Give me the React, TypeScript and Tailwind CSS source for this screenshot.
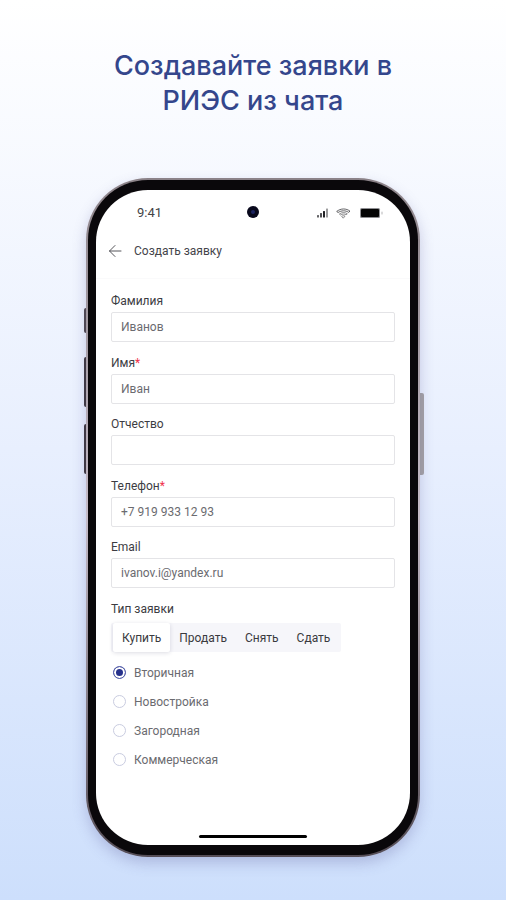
import { useState } from 'react'

type Field = {
  id: string
  label: string
  value: string
  required?: boolean
}

const FIELDS: Field[] = [
  { id: 'surname', label: 'Фамилия', value: 'Иванов' },
  { id: 'name', label: 'Имя', value: 'Иван', required: true },
  { id: 'patronymic', label: 'Отчество', value: '' },
  { id: 'phone', label: 'Телефон', value: '+7 919 933 12 93', required: true },
  { id: 'email', label: 'Email', value: 'ivanov.i@yandex.ru' },
]

const DEALS = ['Купить', 'Продать', 'Снять', 'Сдать']
const KINDS = ['Вторичная', 'Новостройка', 'Загородная', 'Коммерческая']

function StatusBar() {
  return (
    <div className="relative flex items-center justify-between pl-[41px] pr-[26px] pt-[14px] h-[32px]">
      <span className="text-[13px] leading-[18px] text-[#444446]">9:41</span>
      <div className="absolute left-1/2 top-[16px] -translate-x-1/2 w-[12px] h-[12px] rounded-full bg-[#08081c] flex items-center justify-center">
        <span className="w-[4px] h-[4px] rounded-full bg-[#1c2360]" />
      </div>
      <div className="flex items-center text-[#222226]">
        {/* signal */}
        <svg width="12" height="10" viewBox="0 0 12 10" fill="currentColor">
          <rect x="0" y="7" width="2" height="2.5" rx="0.5" opacity="0.7" />
          <rect x="3" y="5" width="2" height="4.5" rx="0.5" opacity="0.8" />
          <rect x="6" y="3" width="2" height="6.5" rx="0.5" />
          <rect x="9" y="0.5" width="2" height="9" rx="0.5" opacity="0.45" />
        </svg>
        {/* wifi */}
        <svg className="ml-[7px]" width="15" height="11" viewBox="0 0 15 11" fill="none" stroke="currentColor" strokeLinecap="round" strokeLinejoin="round">
          <path d="M1 3.2C4.8 0.2 10.2 0.2 14 3.2L12.6 4.3C9.6 2.3 5.4 2.3 2.4 4.3Z" strokeWidth="0.7" />
          <path d="M3.7 5.8C5.9 4.1 9.1 4.1 11.3 5.8L10 6.8C8.5 5.8 6.5 5.8 5 6.8Z" strokeWidth="0.5" />
          <path d="M6 8.2C6.9 7.5 8.1 7.5 9 8.2L7.5 9.9Z" strokeWidth="0.5" />
        </svg>
        {/* battery */}
        <svg className="ml-[9px]" width="24" height="10" viewBox="0 0 24 10">
          <rect x="0" y="0" width="20" height="10" rx="1.5" fill="#8e8e92" />
          <rect x="1" y="1" width="18" height="8" rx="1" fill="#050505" />
          <rect x="21.5" y="3.5" width="1" height="3" rx="0.5" fill="#b5b5b8" />
        </svg>
      </div>
    </div>
  )
}

export default function App() {
  const [values, setValues] = useState<Record<string, string>>(
    Object.fromEntries(FIELDS.map((f) => [f.id, f.value]))
  )
  const [deal, setDeal] = useState('Купить')
  const [kind, setKind] = useState('Вторичная')

  return (
    <div className="min-h-screen overflow-hidden bg-linear-to-b from-white via-[#e8effe] to-[#cddffc] px-6 pt-[48px] pb-[43px] font-['Roboto',sans-serif]">
      <h1 className="mx-auto max-w-[320px] text-center font-['Inter',sans-serif] font-medium text-[27px] leading-[35px] text-[#34468c]">
        Создавайте заявки в РИЭС из чата
      </h1>

      <div className="relative mx-auto mt-[60px] w-full max-w-[334px]">
        {/* side buttons */}
        <div className="absolute -left-[2px] top-[130px] w-[6px] h-[25px] rounded-xs bg-[#4b4347]" />
        <div className="absolute -left-[2px] top-[179px] w-[6px] h-[50px] rounded-xs bg-[#3a3337]" />
        <div className="absolute -left-[2px] top-[246px] w-[6px] h-[50px] rounded-xs bg-[#3a3337]" />
        <div className="absolute -right-[4px] top-[215px] w-[6px] h-[82px] rounded-xs bg-[#a5a2a4]" />

        <div className="relative rounded-[62px] bg-linear-to-b from-[#8b8288] via-[#c5bcc8] to-[#554d56] p-[2px] shadow-[0_6px_14px_rgba(96,96,160,0.3)]">
          <div className="rounded-[60px] bg-[#0a080b] px-[8px] py-[10px]">
            <div className="flex flex-col rounded-[52px] bg-white overflow-hidden">
              <StatusBar />

              <header className="flex items-center gap-3 border-b border-[#fafafb] px-3 mt-[16px] pb-[14px]">
                <button type="button" aria-label="Назад" className="text-[#55555a]">
                  <svg width="14" height="14" viewBox="0 0 14 14" fill="none" stroke="currentColor" strokeWidth="1">
                    <path d="M13 7H1.5M7 1.5L1.5 7L7 12.5" strokeLinecap="round" strokeLinejoin="round" />
                  </svg>
                </button>
                <h2 className="text-[12px] leading-[26px] text-[#44444a]">Создать заявку</h2>
              </header>

              <form className="px-[15px] pt-[14px]" onSubmit={(e) => e.preventDefault()}>
                <div className="grid grid-rows-5 h-[308px]">
                  {FIELDS.map((f) => (
                    <div key={f.id} className="flex flex-col gap-[3px]">
                      <label htmlFor={f.id} className="text-[12px] leading-[16px] text-[#3c3c42]">
                        {f.label}
                        {f.required && <span className="text-[#f0324b]">*</span>}
                      </label>
                      <input
                        id={f.id}
                        value={values[f.id]}
                        onChange={(e) => setValues({ ...values, [f.id]: e.target.value })}
                        className="w-full h-[30px] rounded-xs border border-[#e4e4e7] bg-white px-[9px] text-[12px] text-[#6b6b70] outline-none focus:border-[#34468c]"
                      />
                    </div>
                  ))}
                </div>

                <p className="text-[12px] leading-[16px] text-[#3c3c42]">Тип заявки</p>
                <div className="mt-[6px] inline-flex h-[29px] rounded-xs bg-[#f6f6fa] px-[2px]">
                  {DEALS.map((d) => (
                    <button
                      key={d}
                      type="button"
                      onClick={() => setDeal(d)}
                      className={`px-[9px] text-[12px] text-[#3a3a3e] ${
                        deal === d ? 'rounded-xs bg-white shadow-[0_1px_4px_rgba(40,40,80,0.16)]' : ''
                      }`}
                    >
                      {d}
                    </button>
                  ))}
                </div>

                <div className="mt-[6px] flex flex-col pl-[2px]">
                  {KINDS.map((k) => (
                    <label key={k} className="flex h-[29px] items-center gap-2 text-[12px] text-[#6b6b70]">
                      <input
                        type="radio"
                        name="kind"
                        checked={kind === k}
                        onChange={() => setKind(k)}
                        className="appearance-none w-[13px] h-[13px] rounded-full border border-[#c9cce0] bg-white checked:border-[#5660ac] checked:bg-[#27328c] checked:shadow-[inset_0_0_0_2px_white]"
                      />
                      {k}
                    </label>
                  ))}
                </div>
              </form>

              <div className="mx-auto mt-[61px] mb-[7px] h-[3px] w-[108px] rounded-full bg-black" />
            </div>
          </div>
        </div>
      </div>
    </div>
  )
}
